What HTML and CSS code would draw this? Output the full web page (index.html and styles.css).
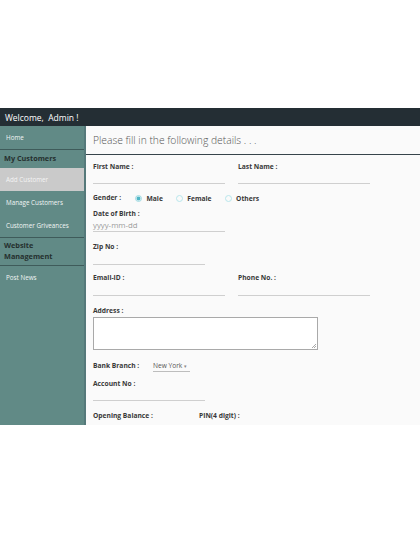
FILE: index.html
```html
<!DOCTYPE html>
<html>
<head>
<meta charset="utf-8">
<link rel="stylesheet" href="styles.css">
</head>
<body>
<div class="app">
  <header class="topbar">Welcome,&nbsp; Admin !</header>
  <div class="main">
    <nav class="sidebar">
      <a class="nav-item">Home</a>
      <div class="nav-head">My Customers</div>
      <a class="nav-item active">Add Customer</a>
      <a class="nav-item">Manage Customers</a>
      <a class="nav-item">Customer Griveances</a>
      <div class="nav-head two">Website<br>Management</div>
      <a class="nav-item">Post News</a>
    </nav>
    <section class="content">
      <div class="title">Please fill in the following details . . .</div>
      <form class="form">
        <div class="row r-name">
          <div class="field w132"><div class="label">First Name :</div><div class="input h10"></div></div>
          <div class="field w132"><div class="label">Last Name :</div><div class="input h10"></div></div>
        </div>
        <div class="gender">
          <span class="label glabel">Gender :</span>
          <span class="radio checked"></span><span class="rlabel">Male</span>
          <span class="radio"></span><span class="rlabel">Female</span>
          <span class="radio"></span><span class="rlabel">Others</span>
        </div>
        <div class="field w132 r-dob"><div class="label">Date of Birth :</div><div class="input h11"><span class="ph">yyyy-mm-dd</span></div></div>
        <div class="field w112 r-zip"><div class="label">Zip No :</div><div class="input h11"></div></div>
        <div class="row r-email">
          <div class="field w132"><div class="label">Email-ID :</div><div class="input h105"></div></div>
          <div class="field w132"><div class="label">Phone No. :</div><div class="input h105"></div></div>
        </div>
        <div class="field r-addr"><div class="label">Address :</div><div class="textarea"><span class="grip"></span></div></div>
        <div class="bank">
          <span class="label">Bank Branch :</span>
          <span class="select">New York <span class="caret">&#9662;</span></span>
        </div>
        <div class="field w112 r-acc"><div class="label">Account No :</div><div class="input h105"></div></div>
        <div class="row r-open">
          <span class="label">Opening Balance :</span>
          <span class="label">PIN(4 digit) :</span>
        </div>
      </form>
    </section>
  </div>
</div>
</body>
</html>
```

FILE: styles.css
```css
* { box-sizing: border-box; }
html, body { margin: 0; padding: 0; background: #fff; }
body { font-family: "Open Sans", "DejaVu Sans", sans-serif; }

.app { margin-top: 108px; }

.topbar {
  height: 18px;
  background: #242e34;
  color: #fff;
  font-size: 8.5px;
  line-height: 19px;
  padding-left: 5px;
  white-space: pre;
}

.main {
  display: flex;
  height: 299px;
  overflow: hidden;
}

.sidebar {
  width: 86px;
  flex: none;
  background: #618a86;
  border-right: 2px solid #55797a;
  display: flex;
  flex-direction: column;
}

.nav-item {
  display: block;
  height: 23px;
  line-height: 23px;
  padding-left: 6px;
  font-size: 6.3px;
  color: #f1f5f4;
}
.nav-item.active { background: #cacaca; color: #f4f4f4; }

.nav-head {
  border-top: 1.5px solid #3f5b5a;
  height: 19px;
  line-height: 17px;
  padding-left: 4px;
  font-size: 7.3px;
  font-weight: 700;
  color: #25302f;
}
.nav-head.two {
  height: 28.5px;
  line-height: 11.4px;
  padding-top: 2px;
  border-bottom: 1.5px solid #3f5b5a;
}

.content {
  flex: 1;
  background: #fafafa;
}

.title {
  height: 29px;
  border-bottom: 1px solid #37444b;
  padding-left: 7px;
  font-size: 10.3px;
  font-weight: 300;
  line-height: 28px;
  color: #555;
}

.form { padding: 7px 0 0 7px; }

.label {
  font-size: 6.7px;
  font-weight: 700;
  color: #383838;
  height: 10px;
  line-height: 10px;
  white-space: nowrap;
}

.row { display: flex; gap: 13px; }
.field.w132 { width: 132px; }
.field.w112 { width: 112px; }

.input { border-bottom: 1.5px solid #cfcfcf; }
.input.h10 { height: 11.5px; }
.input.h11 { height: 13px; }
.input.h105 { height: 12.5px; }

.ph {
  display: block;
  font-size: 7.8px;
  color: #9a9a9a;
  line-height: 13px;
}

.gender {
  margin-top: 9.5px;
  display: flex;
  align-items: center;
  height: 10px;
}
.glabel { width: 42px; }
.radio {
  width: 7px;
  height: 7px;
  border-radius: 50%;
  border: 1px solid #b8e6ec;
  margin-right: 4.5px;
  flex: none;
}
.radio.checked {
  background: #4fb6c6;
  border: 1px solid #bfe7ec;
  box-shadow: inset 0 0 0 0.5px #fff;
}
.rlabel {
  font-size: 6.7px;
  font-weight: 700;
  color: #383838;
  margin-right: 13px;
}

.r-dob { margin-top: 6px; }
.r-zip { margin-top: 9.5px; }
.r-email { margin-top: 8.5px; }
.r-addr { margin-top: 10px; }

.textarea {
  position: relative;
  margin-top: 1px;
  width: 225px;
  height: 33px;
  border: 1px solid #a9a9a9;
  background: #fff;
}
.grip {
  position: absolute;
  right: 1px;
  bottom: 1px;
  width: 4px;
  height: 4px;
  background: linear-gradient(135deg, transparent 50%, #aaa 50%, #aaa 60%, transparent 60%, transparent 75%, #aaa 75%, #aaa 85%, transparent 85%);
}

.bank {
  margin-top: 11px;
  display: flex;
  align-items: center;
  height: 10px;
}
.bank .label { width: 60px; }
.select {
  font-size: 6.6px;
  color: #555;
  line-height: 10px;
  border-bottom: 1px solid #bdbdbd;
  padding-right: 3px;
  white-space: nowrap;
  margin-top: 1px;
}
.caret { font-size: 5px; color: #888; }

.r-acc { margin-top: 8px; }
.r-open { margin-top: 10px; gap: 0; }
.r-open .label:first-child { width: 106px; }
```
